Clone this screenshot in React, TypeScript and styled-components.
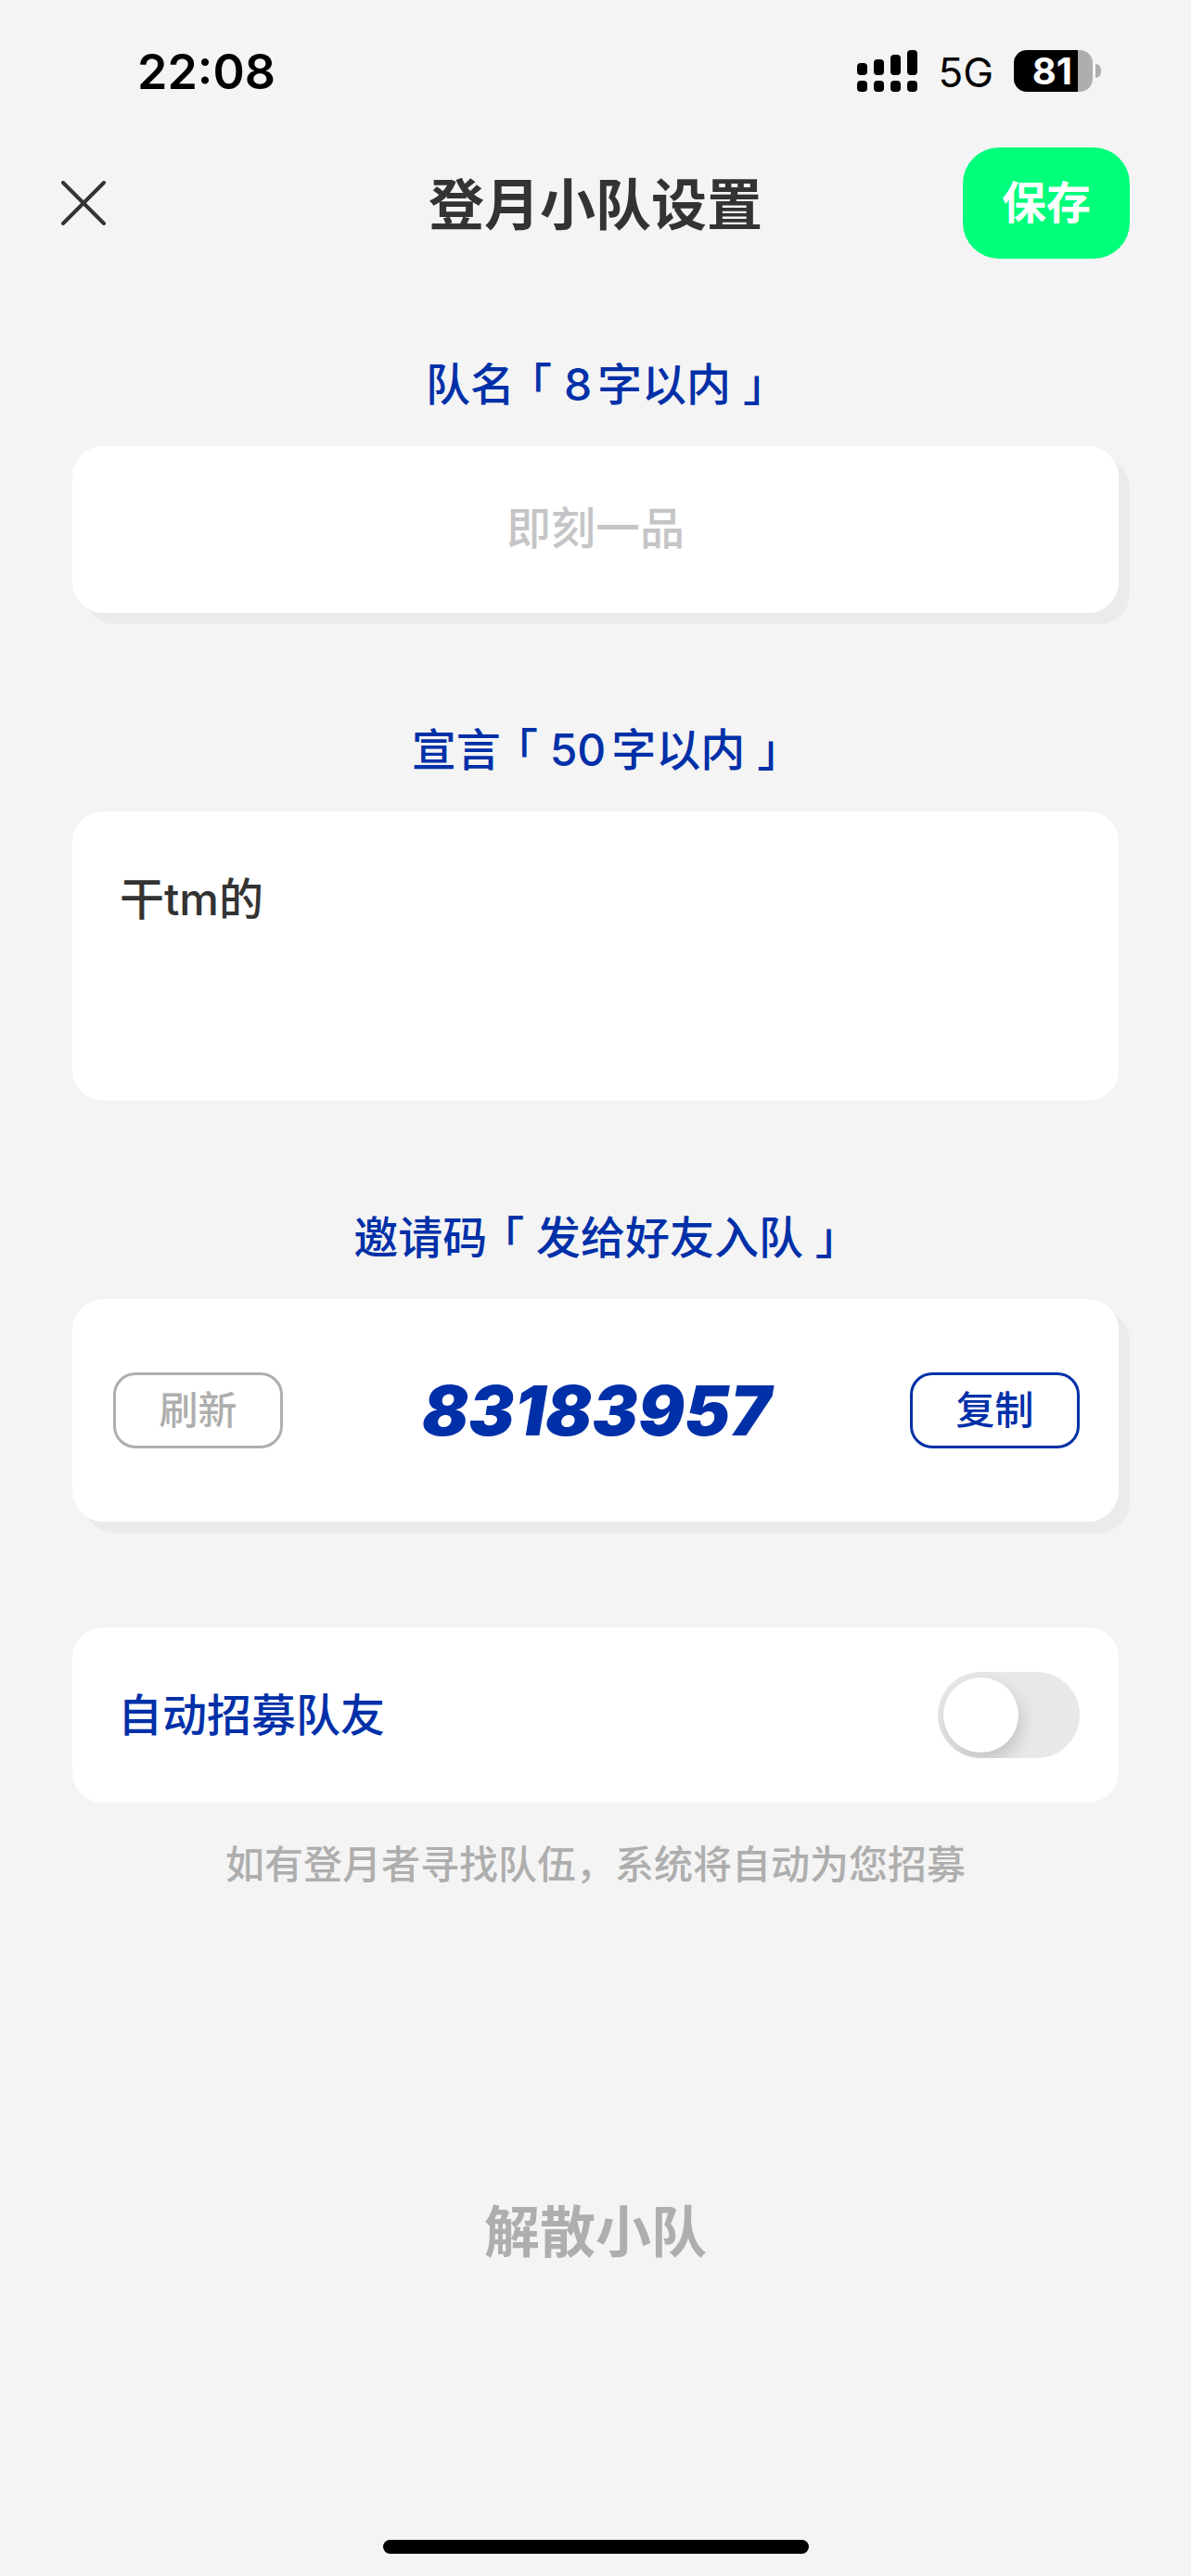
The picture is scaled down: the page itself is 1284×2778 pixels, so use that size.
import React, { useState } from 'react';
import styled, { createGlobalStyle } from 'styled-components';

const sans = `Inter, "Noto Sans CJK SC", sans-serif`;
const blue = '#0030a8';
const grey = '#aeaeae';

const GlobalStyle = createGlobalStyle`
  * { box-sizing: border-box; }
  body {
    margin: 0;
    background: #f4f4f4;
    color: #333333;
    font-family: ${sans};
    font-weight: 500;
  }
  button, input, textarea { font-family: inherit; font-weight: inherit; color: inherit; }
`;

const Screen = styled.div`
  min-height: 100vh;
  display: flex;
  flex-direction: column;
`;

const StatusBar = styled.div`
  height: 159px;
  padding: 48px 97px 0 148px;
  display: flex;
  justify-content: space-between;
  align-items: flex-start;
  color: #000000;
`;

const Clock = styled.time`
  font-size: 52px;
  font-weight: 600;
  line-height: 60px;
`;

const StatusIcons = styled.div`
  display: flex;
  align-items: center;
`;

const Network = styled.span`
  margin: 4px 22px 0 21px;
  font-size: 44px;
  font-weight: 400;
  line-height: 52px;
`;

const Battery = styled.div`
  display: flex;
  align-items: center;
  gap: 3px;
`;

const BatteryBody = styled.div`
  width: 85px;
  height: 45px;
  padding-right: 22px;
  border-radius: 14px;
  background: linear-gradient(to right, #000000 69px, #aeaeae 69px);
  color: #ffffff;
  font-size: 40px;
  font-weight: 700;
  line-height: 45px;
  text-align: right;
`;

const BatteryTip = styled.div`
  width: 6px;
  height: 15px;
  border-radius: 0 6px 6px 0;
  background: #aeaeae;
`;

const Header = styled.header`
  display: grid;
  grid-template-columns: 180px 1fr 180px;
  align-items: center;
  padding: 0 66px;
`;

const CloseButton = styled.button`
  width: 48px;
  height: 48px;
  padding: 0;
  border: 0;
  background: none;
  svg { display: block; }
`;

const Title = styled.h1`
  margin: 0;
  padding-top: 4px;
  font-size: 60px;
  font-weight: 700;
  line-height: 84px;
  text-align: center;
`;

const SaveButton = styled.button`
  height: 120px;
  padding: 0;
  border: 0;
  border-radius: 39px;
  background: #00ff7b;
  color: #ffffff;
  font-size: 48px;
  font-weight: 700;
  line-height: 66px;
`;

const Form = styled.main`
  display: flex;
  flex-direction: column;
  gap: 114px;
  padding: 102px 78px 0;
`;

const Field = styled.section`
  display: flex;
  flex-direction: column;
  gap: 32px;
`;

const Label = styled.label`
  color: ${blue};
  font-size: 48px;
  font-feature-settings: "halt";
  line-height: 68px;
  text-align: center;
  text-autospace: normal;
  white-space: pre;
`;

const Limit = styled.span`
  margin-left: 16px;
`;

const NameInput = styled.input`
  width: 100%;
  height: 180px;
  padding: 0 48px 4px;
  border: 0;
  border-radius: 33px;
  background: #ffffff;
  box-shadow: 12px 12px 0 #ebebeb;
  font-size: 48px;
  text-align: center;
  &::placeholder { color: #c5c5c7; opacity: 1; }
`;

const SloganInput = styled.textarea`
  display: block;
  width: 100%;
  height: 312px;
  padding: 62px 51px;
  border: 0;
  border-radius: 33px;
  background: #ffffff;
  font-size: 48px;
  line-height: 66px;
  resize: none;
`;

const Card = styled.div<{ $height: number; $raised?: boolean }>`
  display: flex;
  align-items: center;
  justify-content: space-between;
  height: ${(p) => p.$height}px;
  padding: 0 42px 0 44px;
  border-radius: 33px;
  background: #ffffff;
  box-shadow: ${(p) => (p.$raised ? '12px 12px 0 #ebebeb' : 'none')};
`;

const OutlineButton = styled.button<{ $color: string }>`
  width: 183px;
  height: 82px;
  padding: 0;
  border: 3px solid ${(p) => p.$color};
  border-radius: 24px;
  background: none;
  color: ${(p) => p.$color};
  font-size: 42px;
  line-height: 60px;
`;

const Code = styled.output`
  color: ${blue};
  font-size: 74px;
  font-weight: 900;
  font-style: italic;
`;

const RecruitBlock = styled.section`
  display: flex;
  flex-direction: column;
  gap: 36px;
`;

const SwitchLabel = styled.label`
  padding-left: 5px;
  color: ${blue};
  font-size: 48px;
  line-height: 66px;
`;

const Switch = styled.input`
  appearance: none;
  width: 153px;
  height: 93px;
  margin: 0;
  padding: 6px;
  border-radius: 47px;
  background: #e8e8e8;
  overflow: hidden;
  &::before {
    content: '';
    display: block;
    width: 81px;
    height: 81px;
    border-radius: 50%;
    background: #ffffff;
    box-shadow: 3px 8px 18px rgba(0, 0, 0, 0.16);
  }
  &:checked { background: #00ff7b; }
  &:checked::before { margin-left: auto; }
`;

const Hint = styled.p`
  margin: 0;
  color: ${grey};
  font-size: 42px;
  line-height: 62px;
  text-align: center;
`;

const DisbandButton = styled.button`
  align-self: center;
  margin-top: 323px;
  padding: 0;
  border: 0;
  background: none;
  color: ${grey};
  font-size: 60px;
  font-weight: 700;
  line-height: 84px;
`;

const HomeIndicator = styled.div`
  width: 459px;
  height: 15px;
  margin: auto auto 24px;
  border-radius: 8px;
  background: #000000;
`;

const barTops = [14, 10, 5, 0];

function Signal() {
  return (
    <svg width="66" height="45" viewBox="0 0 66 45" aria-hidden="true">
      {barTops.map((top, i) => (
        <g key={top}>
          <rect x={i * 18} y={top} width="11" height={27 - top} rx="4" />
          <rect x={i * 18} y="33" width="11" height="12" rx="4" />
        </g>
      ))}
    </svg>
  );
}

export default function App() {
  const [name, setName] = useState('');
  const [slogan, setSlogan] = useState('干tm的');
  const [recruit, setRecruit] = useState(false);

  return (
    <Screen>
      <GlobalStyle />
      <StatusBar>
        <Clock>22:08</Clock>
        <StatusIcons>
          <Signal />
          <Network>5G</Network>
          <Battery>
            <BatteryBody>81</BatteryBody>
            <BatteryTip />
          </Battery>
        </StatusIcons>
      </StatusBar>

      <Header>
        <CloseButton type="button" aria-label="关闭">
          <svg width="48" height="48" viewBox="0 0 48 48" stroke="#333333" strokeWidth="4" strokeLinecap="round">
            <path d="M2 2 46 46M46 2 2 46" />
          </svg>
        </CloseButton>
        <Title>登月小队设置</Title>
        <SaveButton type="button">保存</SaveButton>
      </Header>

      <Form>
        <Field>
          <Label htmlFor="team-name">队名<Limit>「 8字以内 」</Limit></Label>
          <NameInput
            id="team-name"
            placeholder="即刻一品"
            maxLength={8}
            value={name}
            onChange={(e) => setName(e.target.value)}
          />
        </Field>

        <Field>
          <Label htmlFor="slogan">宣言<Limit>「 50字以内 」</Limit></Label>
          <SloganInput
            id="slogan"
            maxLength={50}
            value={slogan}
            onChange={(e) => setSlogan(e.target.value)}
          />
        </Field>

        <Field>
          <Label htmlFor="invite-code">邀请码<Limit>「 发给好友入队 」</Limit></Label>
          <Card $height={240} $raised>
            <OutlineButton type="button" $color={grey}>刷新</OutlineButton>
            <Code id="invite-code">83183957</Code>
            <OutlineButton type="button" $color={blue}>复制</OutlineButton>
          </Card>
        </Field>

        <RecruitBlock>
          <Card $height={189}>
            <SwitchLabel htmlFor="auto-recruit">自动招募队友</SwitchLabel>
            <Switch
              id="auto-recruit"
              type="checkbox"
              role="switch"
              checked={recruit}
              onChange={(e) => setRecruit(e.target.checked)}
            />
          </Card>
          <Hint>如有登月者寻找队伍，系统将自动为您招募</Hint>
        </RecruitBlock>
      </Form>

      <DisbandButton type="button">解散小队</DisbandButton>
      <HomeIndicator />
    </Screen>
  );
}
